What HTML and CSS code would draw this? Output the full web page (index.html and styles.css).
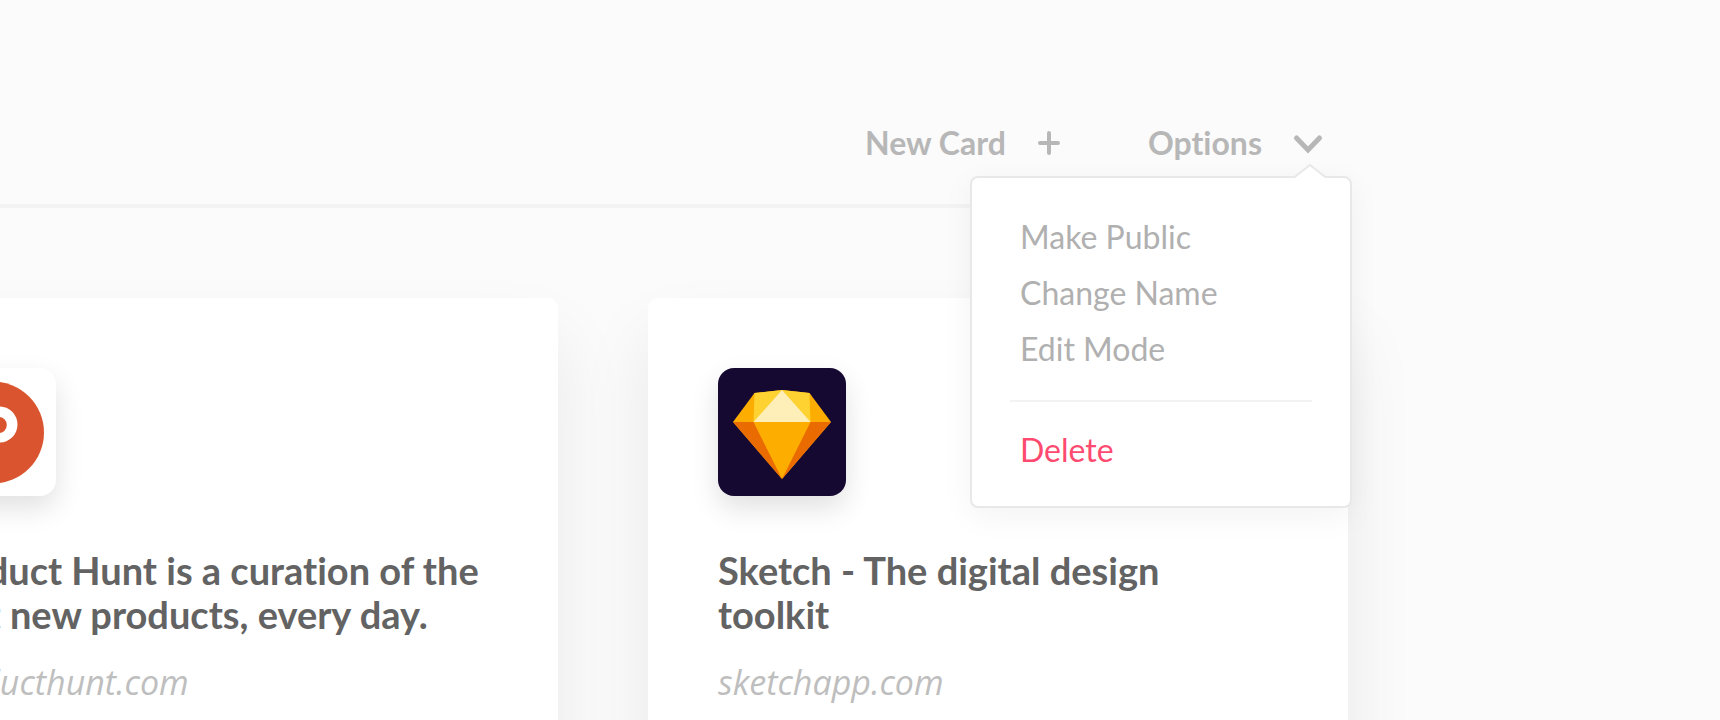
FILE: index.html
```html
<!DOCTYPE html>
<html lang="en">
<head>
<meta charset="utf-8">
<meta name="viewport" content="width=device-width, initial-scale=1">
<title>Cards</title>
<link rel="stylesheet" href="styles.css">
</head>
<body>
<div class="board">
  <header class="toolbar">
    <button class="action" type="button">
      New Card
      <svg class="plus" viewBox="0 0 22 24" aria-hidden="true"><path d="M11 2v20M2 12h18"/></svg>
    </button>
    <div class="dropdown">
      <button class="action" type="button" aria-haspopup="menu" aria-expanded="true" aria-controls="options-menu">
        Options
        <svg class="chevron" viewBox="0 0 28 18" aria-hidden="true"><path d="M2.500 4L14 16L25.500 4"/></svg>
      </button>
      <div class="menu" id="options-menu" role="menu">
        <svg class="menu-arrow" viewBox="0 0 32 15" aria-hidden="true"><path class="arrow-fill" d="M0 15V13.500L16 1L32 13.500V15Z"/><path class="arrow-line" d="M0 13Q1 13 2 12L16 1L30 12Q31 13 32 13"/></svg>
        <button class="menu-item" type="button" role="menuitem">Make Public</button>
        <button class="menu-item" type="button" role="menuitem">Change Name</button>
        <button class="menu-item" type="button" role="menuitem">Edit Mode</button>
        <hr class="menu-divider">
        <button class="menu-item menu-item-danger" type="button" role="menuitem">Delete</button>
      </div>
    </div>
  </header>
  <main class="cards">
    <article class="card">
      <svg class="logo logo-light" viewBox="0 0 128 128" role="img" aria-label="Product Hunt">
        <circle cx="65" cy="64.500" r="51" fill="#da552f"/>
        <path fill="#fff" fill-rule="evenodd" d="M48 38.500H71.500A18 18 0 0 1 71.500 74.500H58V91H48ZM58 49V65H71A7.800 8 0 0 0 71 49Z"/>
      </svg>
      <h2 class="title">Product Hunt is a curation of the best new products, every day.</h2>
      <a class="link" href="#producthunt">producthunt.com</a>
    </article>
    <article class="card">
      <svg class="logo logo-dark" viewBox="0 0 128 128" role="img" aria-label="Sketch">
        <path fill="#fdad00" d="M15 54L36.500 25L64 22L91.500 25L113 54L64 111Z"/>
        <path fill="#ea6c00" d="M15 54H35.500L64 111ZM113 54H92.500L64 111Z"/>
        <path fill="#fdd231" d="M36.500 25L64 22L91.500 25L92.500 54H35.500Z"/>
        <path fill="#feeeb7" d="M64 22L92.500 54H35.500Z"/>
      </svg>
      <h2 class="title">Sketch - The digital design toolkit</h2>
      <a class="link" href="#sketchapp">sketchapp.com</a>
    </article>
  </main>
</div>
</body>
</html>
```
FILE: styles.css
```css
* {
  box-sizing: border-box;
}

body {
  margin: 0;
  background: #fbfbfb;
  font-family: Lato, sans-serif;
  font-variant-ligatures: none;
  overflow: hidden;
}

.board {
  display: flex;
  flex-direction: column;
  height: 100vh;
  margin-left: -142px;
  margin-right: 372px;
}

button {
  border: 0;
  padding: 0;
  background: none;
  font: inherit;
  color: inherit;
  cursor: pointer;
}

.toolbar {
  display: flex;
  justify-content: flex-end;
  gap: 88px;
  padding: 123px 26px 41px 0;
  border-bottom: 4px solid #f3f3f3;
}

.action {
  display: flex;
  align-items: center;
  gap: 32px;
  font-size: 32px;
  font-weight: 700;
  line-height: 40px;
  color: #b7b7b7;
}

.plus,
.chevron {
  fill: none;
  stroke: #b7b7b7;
  stroke-width: 4;
  stroke-linecap: round;
}

.plus {
  width: 22px;
  height: 24px;
}

.chevron {
  width: 28px;
  height: 18px;
  overflow: visible;
  stroke-width: 5;
}

.dropdown {
  position: relative;
}

.menu {
  position: absolute;
  z-index: 1;
  top: 53px;
  right: -30px;
  width: 382px;
  padding: 31px 36px 28px;
  border: 2px solid #e8e8e8;
  border-radius: 8px;
  background: #fff;
  box-shadow: 0 8px 32px rgba(0, 0, 0, 0.05);
}

.menu-arrow {
  position: absolute;
  top: -14px;
  right: 24px;
  width: 32px;
  height: 15px;
}

.arrow-fill {
  fill: #fff;
}

.arrow-line {
  fill: none;
  stroke: #e8e8e8;
  stroke-width: 2;
}

.menu-item {
  display: block;
  width: 100%;
  padding-left: 12px;
  font-size: 32px;
  line-height: 56px;
  text-align: left;
  color: #b0b0b0;
}

.menu-item-danger {
  color: #ff4a70;
}

.menu-divider {
  height: 2px;
  margin: 23px 2px 20px;
  border: 0;
  background: #f3f3f3;
}

.cards {
  display: grid;
  flex: 1;
  grid-template-columns: 1fr 1fr;
  gap: 90px;
  padding-top: 90px;
}

.card {
  padding: 70px;
  margin-bottom: -120px;
  border-radius: 10px;
  background: #fff;
  box-shadow: 0 40px 72px rgba(0, 0, 0, 0.08);
}

.logo {
  display: block;
  width: 128px;
  height: 128px;
  margin-bottom: 52px;
  border-radius: 16px;
  box-shadow: 0 12px 28px rgba(0, 0, 0, 0.12);
}

.logo-light {
  background: #fff;
}

.logo-dark {
  background: #150931;
}

.title {
  margin: 0 0 24px;
  font-size: 38px;
  font-weight: 700;
  line-height: 44px;
  color: #636363;
}

.link {
  font-family: "Open Sans", sans-serif;
  font-size: 34px;
  font-style: italic;
  line-height: 44px;
  text-decoration: none;
  color: #bebebe;
}
```
